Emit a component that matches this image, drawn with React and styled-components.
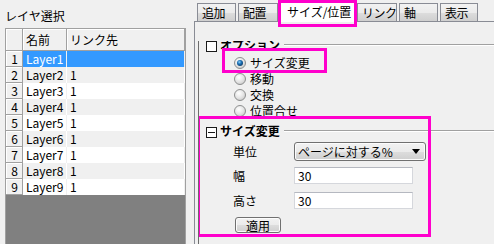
import React from 'react';
import styled, { createGlobalStyle, css } from 'styled-components';

const FONT = `"Noto Sans CJK JP", "Liberation Sans", sans-serif`;
const MAGENTA = '#ff00cc';

const layers = [1, 2, 3, 4, 5, 6, 7, 8, 9].map(n => ({
  id: n,
  name: `Layer${n}`,
  link: n === 1 ? '' : '1',
}));

const tabs = [
  { label: '追加', width: 39 },
  { label: '配置', width: 40 },
  { label: 'サイズ/位置', width: 75, active: true },
  { label: 'リンク', width: 40 },
  { label: '軸', width: 39 },
  { label: '表示', width: 38 },
];

const options = ['サイズ変更', '移動', '交換', '位置合せ'];

const App = () => (
  <>
    <GlobalStyle />
    <Window>
      <LayerPanel>
        <PanelTitle>レイヤ選択</PanelTitle>
        <Grid>
          <HeadRow>
            <Corner />
            <HeadCell $w={44}>名前</HeadCell>
            <HeadCell $fill>リンク先</HeadCell>
          </HeadRow>
          {layers.map((l, i) => (
            <Row key={l.id} $alt={i % 2 === 1}>
              <RowHead>{l.id}</RowHead>
              <Cell $w={44} $selected={i === 0} $alt={i % 2 === 1}>
                {l.name}
              </Cell>
              <Cell $fill $selected={i === 0} $alt={i % 2 === 1}>
                {l.link}
              </Cell>
            </Row>
          ))}
        </Grid>
      </LayerPanel>

      <TabArea>
        <TabStrip>
          {tabs.map(t => (
            <Tab key={t.label} $w={t.width} $active={t.active}>
              {t.label}
            </Tab>
          ))}
        </TabStrip>
        <Pane>
          <Viewport>
            <Scroller>
              <GroupHead>
                <Toggle />
                オプション
              </GroupHead>
              <RadioList>
                {options.map((o, i) => (
                  <RadioItem key={o} $highlight={i === 0}>
                    <RadioIcon checked={i === 0} />
                    {o}
                  </RadioItem>
                ))}
              </RadioList>
              <Group>
                <GroupHead>
                  <Toggle $open />
                  サイズ変更
                </GroupHead>
                <FormRow $top={4}>
                  <Label>単位</Label>
                  <Select>
                    ページに対する%
                    <DropArrow />
                  </Select>
                </FormRow>
                <FormRow $top={6}>
                  <Label>幅</Label>
                  <TextInput defaultValue="30" />
                </FormRow>
                <FormRow $top={8}>
                  <Label>高さ</Label>
                  <TextInput defaultValue="30" />
                </FormRow>
                <ApplyButton>適用</ApplyButton>
              </Group>
            </Scroller>
          </Viewport>
        </Pane>
      </TabArea>
    </Window>
  </>
);

export default App;

const RadioIcon = ({ checked }) => (
  <svg width="12" height="12" viewBox="0 0 12 12">
    <defs>
      <radialGradient id="rbg" cx="40%" cy="35%" r="70%">
        <stop offset="0%" stopColor="#ffffff" />
        <stop offset="60%" stopColor="#e4e4e4" />
        <stop offset="100%" stopColor="#c8c8c8" />
      </radialGradient>
      <radialGradient id="rdot" cx="40%" cy="35%" r="70%">
        <stop offset="0%" stopColor="#8fd4fa" />
        <stop offset="45%" stopColor="#1d72b8" />
        <stop offset="100%" stopColor="#0a3866" />
      </radialGradient>
    </defs>
    <circle cx="6" cy="6" r="5.5" fill="url(#rbg)" stroke="#8e8f8f" />
    {checked && <circle cx="6" cy="6" r="3" fill="url(#rdot)" />}
  </svg>
);

const DropArrow = () => (
  <svg width="8" height="5" viewBox="0 0 8 5">
    <polygon points="0,0 8,0 4,5" fill="#000" />
  </svg>
);

const GlobalStyle = createGlobalStyle`
  html, body { margin: 0; padding: 0; }
  body {
    background: #f0f0f0;
    font-family: ${FONT};
    font-size: 12px;
    color: #000;
  }
`;

const Window = styled.div`
  display: flex;
  width: 494px;
  height: 244px;
  overflow: hidden;
  background: #f0f0f0;
`;

const LayerPanel = styled.div`
  flex: none;
  width: 194px;
  display: flex;
  flex-direction: column;
  padding: 0 8px 0 5px;
  box-sizing: border-box;
`;

const PanelTitle = styled.div`
  height: 28px;
  padding-top: 9px;
  box-sizing: border-box;
  line-height: 13px;
`;

const Grid = styled.div`
  flex: 1;
  background: #808080;
  border: 1px solid #a0a0a0;
  border-bottom: none;
`;

const HeadRow = styled.div`
  display: flex;
  height: 22px;
`;

const headBox = css`
  box-sizing: border-box;
  background: #f0f0f0;
  border-right: 1px solid #a0a0a0;
  border-bottom: 1px solid #a0a0a0;
  box-shadow: inset 1px 1px #ffffff;
`;

const Corner = styled.div`
  ${headBox};
  width: 17px;
`;

const HeadCell = styled.div`
  ${headBox};
  width: ${p => (p.$fill ? 'auto' : `${p.$w}px`)};
  flex: ${p => (p.$fill ? 1 : 'none')};
  display: flex;
  align-items: center;
  padding-left: 3px;
  line-height: 14px;
`;

const Row = styled.div`
  display: flex;
  height: 16px;
  background: ${p => (p.$alt ? '#f0f0f0' : '#ffffff')};
`;

const RowHead = styled.div`
  ${headBox};
  width: 17px;
  text-align: right;
  padding-right: 4px;
  line-height: 15px;
`;

const Cell = styled.div`
  box-sizing: border-box;
  width: ${p => (p.$fill ? 'auto' : `${p.$w}px`)};
  flex: ${p => (p.$fill ? 1 : 'none')};
  padding-left: 3px;
  line-height: 16px;
  border-right: 1px solid ${p => (p.$alt ? '#ffffff' : '#f0f0f0')};
  ${p =>
    p.$selected &&
    css`
      background: #3399ff;
      color: #ffffff;
      border-right-color: #f0f0f0;
    `}
`;

const TabArea = styled.div`
  flex: 1;
  display: flex;
  flex-direction: column;
  min-width: 0;
`;

const TabStrip = styled.div`
  display: flex;
  align-items: flex-end;
  gap: 2px;
  height: 21px;
  padding-left: 3px;
`;

const Tab = styled.div`
  position: relative;
  flex: none;
  width: ${p => p.$w}px;
  height: 18px;
  box-sizing: border-box;
  border: 1px solid #898c95;
  border-bottom: none;
  padding-left: 4px;
  white-space: nowrap;
  letter-spacing: -0.5px;
  line-height: 17px;
  background: linear-gradient(#f2f2f2 0%, #ebebeb 50%, #dddddd 51%, #cfcfcf 100%);
  ${p =>
    p.$active &&
    css`
      height: 21px;
      margin-bottom: -1px;
      padding-left: 6px;
      letter-spacing: 0;
      line-height: 19px;
      background: #ffffff;
      z-index: 1;

      &::after {
        content: '';
        position: absolute;
        top: -2px;
        left: -3px;
        right: -3px;
        bottom: -5px;
        border: 3px solid ${MAGENTA};
      }
    `}
`;

const Pane = styled.div`
  flex: 1;
  display: flex;
  border-top: 1px solid #898c95;
  border-left: 1px solid #898c95;
  padding: 19px 0 0 3px;
`;

const Viewport = styled.div`
  flex: 1;
  overflow: hidden;
  border-left: 1px solid #6d6d6d;
`;

const Scroller = styled.div`
  margin-top: -3px;
`;

const GroupHead = styled.div`
  display: flex;
  align-items: center;
  height: 14px;
  padding-left: 7px;
  font-weight: bold;
  line-height: 14px;

  &::after {
    content: '';
    flex: 1;
    margin-left: 4px;
    border-top: 1px solid #a0a0a0;
    border-bottom: 1px solid #ffffff;
  }
`;

const Toggle = styled.span`
  position: relative;
  flex: none;
  width: 11px;
  height: 11px;
  box-sizing: border-box;
  border: 1px solid #1a1a1a;
  background: #ffffff;
  margin: 2px 3px 0 0;
  ${p =>
    p.$open &&
    css`
      &::before {
        content: '';
        position: absolute;
        left: 1px;
        right: 1px;
        top: 4px;
        border-top: 1px solid #1a1a1a;
      }
    `}
`;

const RadioList = styled.div`
  padding-top: 3px;
`;

const RadioItem = styled.div`
  position: relative;
  display: flex;
  align-items: center;
  gap: 4px;
  height: 16px;
  padding-left: 35px;
  line-height: 16px;
  ${p =>
    p.$highlight &&
    css`
      &::after {
        content: '';
        position: absolute;
        top: -7px;
        bottom: -2px;
        left: 23px;
        width: 105px;
        box-sizing: border-box;
        border: 3px solid ${MAGENTA};
      }
    `}
`;

const Group = styled.div`
  position: relative;
  margin-top: 5px;
  padding-bottom: 4px;

  &::after {
    content: '';
    position: absolute;
    top: -8px;
    left: -2px;
    width: 234px;
    bottom: 0;
    box-sizing: border-box;
    border: 3px solid ${MAGENTA};
  }
`;

const FormRow = styled.div`
  display: flex;
  align-items: center;
  margin-top: ${p => p.$top}px;
  padding-left: 34px;
`;

const Label = styled.span`
  width: 61px;
  flex: none;
  line-height: 14px;
`;

const winButton = css`
  box-sizing: border-box;
  border: 1px solid #707070;
  border-radius: 3px;
  background: linear-gradient(#f2f2f2 0%, #ebebeb 50%, #dddddd 51%, #cfcfcf 100%);
  box-shadow: inset 0 0 0 1px #fcfcfc;
`;

const Select = styled.div`
  ${winButton};
  width: 132px;
  height: 19px;
  display: flex;
  align-items: center;
  justify-content: space-between;
  padding: 0 5px 0 3px;
  line-height: 14px;
`;

const TextInput = styled.input`
  width: 119px;
  height: 17px;
  box-sizing: border-box;
  border: 1px solid #d5d7dc;
  border-top-color: #b5b8c0;
  background: #ffffff;
  padding: 0 0 0 3px;
  font-family: ${FONT};
  font-size: 12px;
  color: #000;
  outline: none;
`;

const ApplyButton = styled.button`
  ${winButton};
  display: block;
  width: 46px;
  height: 16px;
  margin: 8px 0 0 36px;
  padding: 0;
  font-family: ${FONT};
  font-size: 12px;
  line-height: 13px;
  color: #000;
`;
